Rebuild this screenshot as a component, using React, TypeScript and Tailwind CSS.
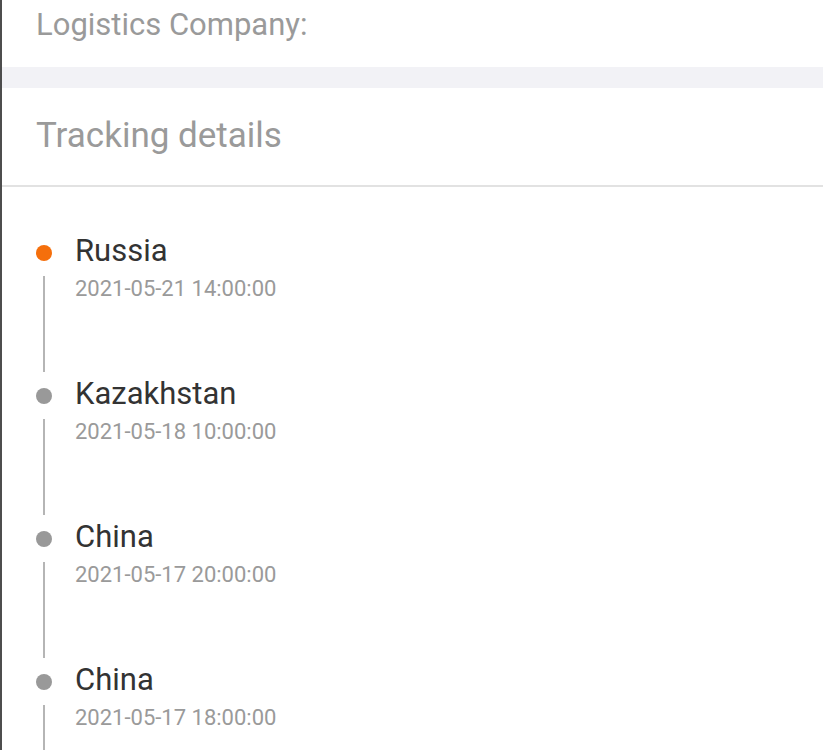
import React from 'react'

const steps = [
  { place: 'Russia', time: '2021-05-21 14:00:00', active: true },
  { place: 'Kazakhstan', time: '2021-05-18 10:00:00', active: false },
  { place: 'China', time: '2021-05-17 20:00:00', active: false },
  { place: 'China', time: '2021-05-17 18:00:00', active: false },
]

const App = () => {
  return (
    <div className="h-[750px] w-[823px] overflow-hidden bg-white border-l-2 border-[#4d4d4d] font-['Roboto',sans-serif]">
      <div className="h-[67px] pl-[34px] pt-[7px] text-[31px] leading-[36px] text-[#9a9a9a]">
        Logistics Company:
      </div>
      <div className="h-[21px] bg-[#f2f2f6]" />
      <div className="h-[99px] flex items-center pl-[34px] text-[35px] text-[#9a9a9a] border-b-2 border-[#e2e2e2]">
        Tracking details
      </div>

      <div className="pt-[46px]">
        {steps.map((s, i) => (
          <div key={i} className="flex h-[143px]">
            <div className="ml-[34px] w-4 flex flex-col items-center pt-[12px]">
              <div className={'h-4 w-4 rounded-full ' + (s.active ? 'bg-[#f56f0c]' : 'bg-[#999999]')} />
              <div className="mt-[15px] mb-1 w-[2px] flex-1 bg-[#b5b5b5]" />
            </div>
            <div className="ml-[23px] pt-[1px]">
              <div className="text-[31px] leading-[34px] text-[#333333]">{s.place}</div>
              <div className="mt-[7px] text-[22px] leading-[28px] text-[#9a9a9a]">{s.time}</div>
            </div>
          </div>
        ))}
      </div>
    </div>
  )
}

export default App
